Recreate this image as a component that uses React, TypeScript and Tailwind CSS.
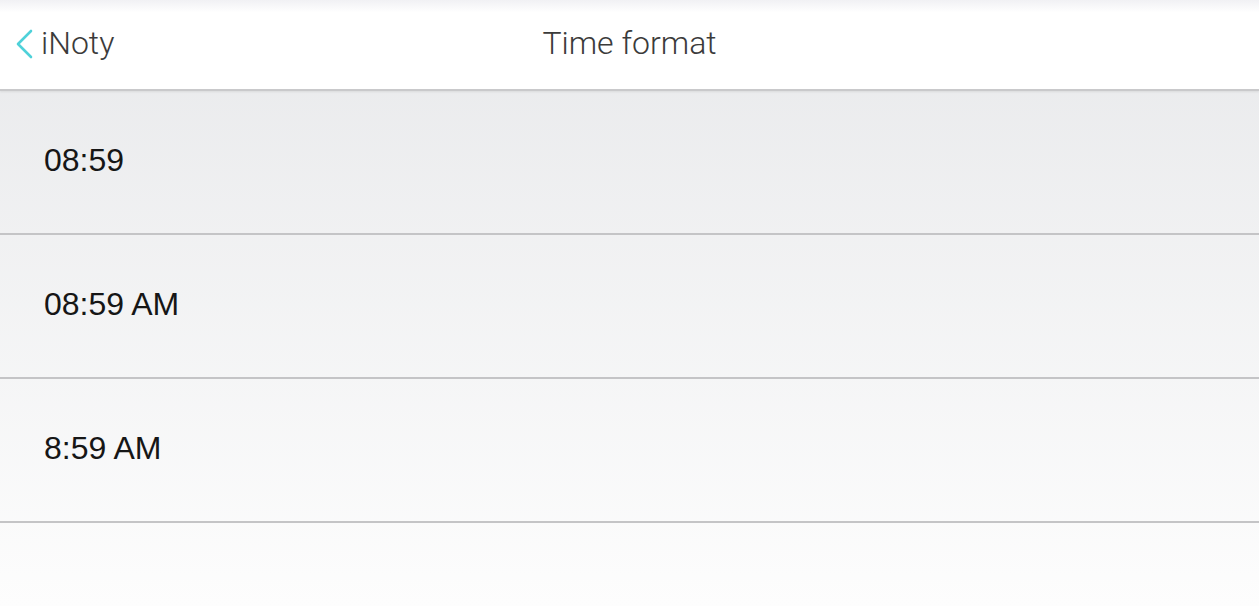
const formats = ["08:59", "08:59 AM", "8:59 AM"];

export default function App() {
  return (
    <div className="flex h-[606px] w-full flex-col overflow-hidden bg-gradient-to-b from-[#e8e9eb] to-[#fdfdfd]">
      {/* Top bar */}
      <header className="relative flex h-[91px] shrink-0 items-center border-b-2 border-[#c9c9cb] bg-gradient-to-b from-[#f1f1f4] via-white via-[14%] to-white shadow-[0_1px_2px_rgba(0,0,0,0.08)]">
        <button className="-mt-[3px] flex items-center gap-[9px] pl-[15px] font-['Roboto',sans-serif] text-[32px] font-light text-[#3b3b3b]">
          <svg width="19" height="30" viewBox="0 0 19 30" fill="none" className="mt-[1px]">
            <path d="M16 2 L3 15 L16 28" stroke="#4fd1d9" strokeWidth="2.6" strokeLinecap="round" strokeLinejoin="round" />
          </svg>
          <span className="-ml-[2px]">iNoty</span>
        </button>
        <h1 className="absolute left-1/2 top-[23px] -translate-x-1/2 font-['Roboto',sans-serif] text-[32px] font-light leading-[40px] text-[#3b3b3b]">
          Time format
        </h1>
      </header>

      {/* Options */}
      <ul className="flex flex-col">
        {formats.map((f) => (
          <li
            key={f}
            className="flex h-[144px] items-center border-b-2 border-[#c4c4c6] pb-[4px] pl-[44px] font-['Liberation_Sans',Arial,sans-serif] text-[32px] text-[#161616]"
          >
            {f}
          </li>
        ))}
      </ul>
    </div>
  );
}
